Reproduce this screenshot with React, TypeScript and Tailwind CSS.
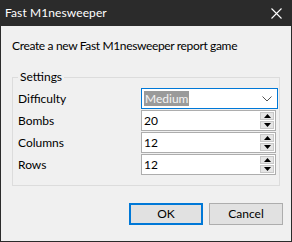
const font = { fontFamily: 'Lato, "Noto Sans", sans-serif' };

const SpinBox = ({ value }: { value: string }) => {
  return (
    <div className="flex h-[21px] w-[135px] border border-[#adadad] bg-white">
      <span className="flex grow items-center pl-[2px] text-[12px] text-black">{value}</span>
      <div className="my-[1px] mr-[1px] flex w-[14px] flex-col gap-[1px]">
        <div className="flex grow items-center justify-center border border-[#c8c8c8] bg-[#e5e5e5]">
          <svg width="7" height="4" viewBox="0 0 7 4">
            <path d="M3.5 0 L7 4 L0 4 Z" fill="#000" />
          </svg>
        </div>
        <div className="flex grow items-center justify-center border border-[#c8c8c8] bg-[#e5e5e5]">
          <svg width="7" height="4" viewBox="0 0 7 4">
            <path d="M0 0 L7 0 L3.5 4 Z" fill="#000" />
          </svg>
        </div>
      </div>
    </div>
  );
};

const Row = ({ label, children }: { label: string; children: React.ReactNode }) => {
  return (
    <div className="flex items-center">
      <span className="w-[123px] text-[12px] text-black">{label}</span>
      {children}
    </div>
  );
};

export default function App() {
  return (
    <div
      className="flex h-[242px] w-[292px] flex-col border-x border-b border-[#2b2b2b] bg-[#f0f0f0]"
      style={font}
    >
      <div className="-mx-[1px] flex h-[26px] shrink-0 items-center justify-between bg-[#2b2b2b] pl-[5px] pr-[10px]">
        <span className="text-[12px] tracking-[0.1px] text-white">Fast M1nesweeper</span>
        <svg width="11" height="11" viewBox="0 0 11 11">
          <path d="M0.5 0.5 L10.5 10.5 M10.5 0.5 L0.5 10.5" stroke="#fff" strokeWidth="1.1" />
        </svg>
      </div>

      <div className="flex flex-col px-[11px]">
        <p className="mt-[12px] text-[12px] leading-[16px] tracking-[-0.35px] text-black">
          Create a new Fast M1nesweeper report game
        </p>

        <fieldset className="mt-[15px] border border-[#dcdcdc] pb-[10px] pl-[5px] pt-[3px]">
          <legend className="px-[2px] text-[12px] leading-[16px] text-black">Settings</legend>
          <div className="flex flex-col gap-[1px]">
            <Row label="Difficulty">
              <div className="flex h-[21px] w-[137px] items-center justify-between border border-[#0078d7] bg-white pl-[2px] pr-[5px]">
                <span className="bg-[#9a9a9a] px-[1px] text-[12px] leading-[15px] text-[#f4f4f4]">Medium</span>
                <svg width="10" height="6" viewBox="0 0 10 6">
                  <path d="M0.5 0.5 L5 5 L9.5 0.5" stroke="#555" strokeWidth="1" fill="none" />
                </svg>
              </div>
            </Row>
            <Row label="Bombs">
              <SpinBox value="20" />
            </Row>
            <Row label="Columns">
              <SpinBox value="12" />
            </Row>
            <Row label="Rows">
              <SpinBox value="12" />
            </Row>
          </div>
        </fieldset>

        <div className="mt-[17px] flex justify-end gap-[6px]">
          <button className="h-[22px] w-[74px] border-2 border-[#0078d7] bg-[#e1e1e1] text-[12px] text-black">
            OK
          </button>
          <button className="-mr-[3px] h-[22px] w-[74px] border border-[#adadad] bg-[#e1e1e1] text-[12px] text-black">
            Cancel
          </button>
        </div>
      </div>
    </div>
  );
}
